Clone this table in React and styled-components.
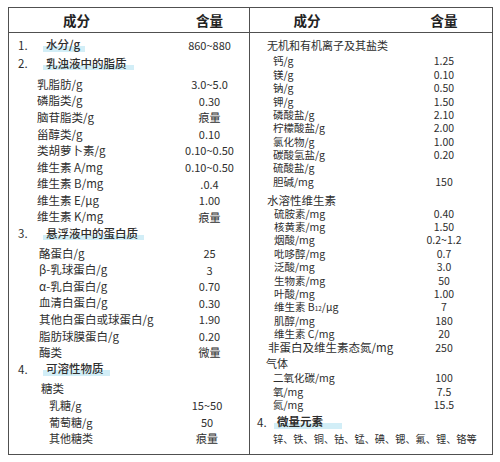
import React from "react"
import styled, { createGlobalStyle } from "styled-components"

const Global = createGlobalStyle`
  html, body { margin: 0; background: #fff; }
  body {
    font-family: "Noto Sans CJK SC", "Noto Sans", sans-serif;
    color: #2e2e2e;
  }
`

const Page = styled.div`
  padding: 7px 0 0 8px;
  width: 500px;
  height: 462px;
  box-sizing: border-box;
`

const Table = styled.div`
  width: 485px;
  height: 448px;
  box-sizing: border-box;
  border: 1px solid #505050;
  display: grid;
  grid-template-columns: 240px 1fr;
`

const Panel = styled.div`
  display: flex;
  flex-direction: column;
  min-width: 0;
  & + & {
    border-left: 1px solid #505050;
  }
`

const Head = styled.div`
  height: 24px;
  border-bottom: 1px solid #505050;
  display: grid;
  grid-template-columns: 1fr ${p => p.$valW}px;
  align-items: center;
  font-size: 13.5px;
  font-weight: 700;
  color: #222;
  span:first-child {
    text-align: center;
    padding-right: ${p => p.$shift}px;
  }
  span:last-child {
    text-align: center;
  }
`

const Body = styled.div`
  display: flex;
  flex-direction: column;
  padding-top: ${p => p.$top}px;
`

const Row = styled.div`
  height: ${p => p.$h}px;
  margin-top: ${p => p.$gap || 0}px;
  display: grid;
  grid-template-columns: 1fr ${p => p.$valW}px;
  align-items: center;
  white-space: nowrap;
`

const Label = styled.div`
  display: flex;
  align-items: center;
  padding-left: ${p => p.$indent}px;
  font-size: ${p => p.$size}px;
  font-weight: ${p => p.$weight || 400};
  line-height: 1;
`

const Num = styled.span`
  display: inline-block;
  width: ${p => p.$w}px;
  font-weight: 400;
`

const Mark = styled.span`
  display: inline-block;
  margin-left: -3px;
  padding: 1px ${p => p.$pr}px 2px 3px;
  background: linear-gradient(to bottom, transparent 55%, #d2eef7 55%, #d2eef7 92%, transparent 92%);
`

const Value = styled.div`
  text-align: center;
  font-size: ${p => p.$size}px;
  line-height: 1;
  padding-right: ${p => p.$shift || 0}px;
`

const Sub = styled.span`
  font-size: 0.6em;
  position: relative;
  top: 0.25em;
`

const leftRows = [
  { num: "1.", mark: "水分/g", pr: 5, value: "860~880" },
  { num: "2.", mark: "乳浊液中的脂质", pr: 7, gap: 2 },
  { text: "乳脂肪/g", value: "3.0~5.0", indent: 28, gap: 4 },
  { text: "磷脂类/g", value: "0.30", indent: 28 },
  { text: "脑苷脂类/g", value: "痕量", indent: 28 },
  { text: "甾醇类/g", value: "0.10", indent: 28 },
  { text: "类胡萝卜素/g", value: "0.10~0.50", indent: 28 },
  { text: "维生素 A/mg", value: "0.10~0.50", indent: 28 },
  { text: "维生素 B/mg", value: ".0.4", indent: 28 },
  { text: "维生素 E/μg", value: "1.00", indent: 28 },
  { text: "维生素 K/mg", value: "痕量", indent: 28 },
  { num: "3.", mark: "悬浮液中的蛋白质", pr: 6 },
  { text: "酪蛋白/g", value: "25", indent: 30, gap: 3 },
  { text: "β-乳球蛋白/g", value: "3", indent: 30 },
  { text: "α-乳白蛋白/g", value: "0.70", indent: 30 },
  { text: "血清白蛋白/g", value: "0.30", indent: 30 },
  { text: "其他白蛋白或球蛋白/g", value: "1.90", indent: 30 },
  { text: "脂肪球膜蛋白/g", value: "0.20", indent: 30 },
  { text: "酶类", value: "微量", indent: 30 },
  { num: "4.", mark: "可溶性物质", pr: 6 },
  { text: "糖类", indent: 32, gap: 3 },
  { text: "乳糖/g", value: "15~50", indent: 40, size: 11, shift: 5 },
  { text: "葡萄糖/g", value: "50", indent: 40, size: 11, shift: 5 },
  { text: "其他糖类", value: "痕量", indent: 40, size: 11, shift: 5 },
]

const rightRows = [
  { text: "无机和有机离子及其盐类", indent: 17, size: 11 },
  { text: "钙/g", value: "1.25", indent: 23, gap: 2.5 },
  { text: "镁/g", value: "0.10", indent: 23 },
  { text: "钠/g", value: "0.50", indent: 23 },
  { text: "钾/g", value: "1.50", indent: 23 },
  { text: "磷酸盐/g", value: "2.10", indent: 23 },
  { text: "柠檬酸盐/g", value: "2.00", indent: 23 },
  { text: "氯化物/g", value: "1.00", indent: 23 },
  { text: "碳酸氢盐/g", value: "0.20", indent: 23 },
  { text: "硫酸盐/g", indent: 23 },
  { text: "胆碱/mg", value: "150", indent: 23 },
  { text: "水溶性维生素", indent: 17, size: 11.5, gap: 5 },
  { text: "硫胺素/mg", value: "0.40", indent: 24 },
  { text: "核黄素/mg", value: "1.50", indent: 24 },
  { text: "烟酸/mg", value: "0.2~1.2", indent: 24 },
  { text: "吡哆醇/mg", value: "0.7", indent: 24 },
  { text: "泛酸/mg", value: "3.0", indent: 24 },
  { text: "生物素/mg", value: "50", indent: 24 },
  { text: "叶酸/mg", value: "1.00", indent: 24 },
  { text: <>维生素 B<Sub>12</Sub>/μg</>, value: "7", indent: 24 },
  { text: "肌醇/mg", value: "180", indent: 24 },
  { text: "维生素 C/mg", value: "20", indent: 24 },
  { text: "非蛋白及维生素态氮/mg", value: "250", indent: 18, size: 11.5 },
  { text: "气体", indent: 16, size: 11, gap: 2 },
  { text: "二氧化碳/mg", value: "100", indent: 23, gap: 2 },
  { text: "氧/mg", value: "7.5", indent: 23 },
  { text: "氮/mg", value: "15.5", indent: 23 },
  { num: "4.", mark: "微量元素", pr: 19, indent: 7, size: 11.5, gap: 3, weight: 700 },
  { text: "锌、铁、铜、钴、锰、碘、锶、氟、锂、铬等", indent: 23, gap: 4, size: 10.2 },
]

function Rows({ rows, h, valW, base, valSize, numW, secIndent, secSize, secWeight }) {
  return rows.map((r, i) => (
    <Row key={i} $h={h} $gap={r.gap} $valW={valW}>
      {r.mark ? (
        <Label
          $indent={r.indent ?? secIndent}
          $size={r.size || secSize}
          $weight={r.weight || secWeight}
        >
          <Num $w={r.indent ? 20 : numW}>{r.num}</Num>
          <Mark $pr={r.pr}>{r.mark}</Mark>
        </Label>
      ) : (
        <Label $indent={r.indent} $size={r.size || base}>
          {r.text}
        </Label>
      )}
      <Value $size={valSize} $shift={r.shift}>{r.value}</Value>
    </Row>
  ))
}

export default function App() {
  return (
    <Page>
      <Global />
      <Table>
        <Panel>
          <Head $valW={79} $shift={26}>
            <span>成分</span>
            <span>含量</span>
          </Head>
          <Body $top={4}>
            <Rows
              rows={leftRows}
              h={16.6}
              valW={79}
              base={11.5}
              valSize={11}
              numW={28}
              secIndent={9}
              secSize={11.5}
              secWeight={500}
            />
          </Body>
        </Panel>
        <Panel>
          <Head $valW={96} $shift={32}>
            <span>成分</span>
            <span>含量</span>
          </Head>
          <Body $top={6}>
            <Rows
              rows={rightRows}
              h={13.4}
              valW={96}
              base={10.5}
              valSize={10.5}
              numW={20}
              secIndent={7}
              secSize={11.5}
              secWeight={700}
            />
          </Body>
        </Panel>
      </Table>
    </Page>
  )
}
